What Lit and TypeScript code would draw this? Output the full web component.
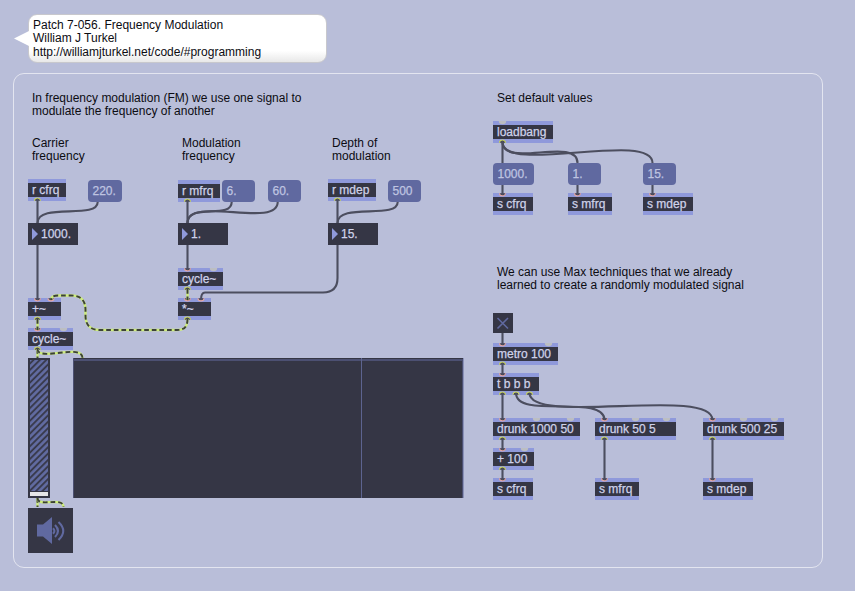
import { LitElement, html, svg, css, nothing } from "lit";
import { customElement, property } from "lit/decorators.js";
import { styleMap } from "lit/directives/style-map.js";

type Kind = "object" | "message" | "number";

interface PatchBox {
  kind: Kind;
  text: string;
  x: number;
  y: number;
  w: number;
  inlets?: string;
  outlets?: number[];
}

/* Inlets are "offset:state" pairs, where state is c (connected) or f (free). */
const boxes: PatchBox[] = [
  { kind: "object", text: "r cfrq", x: 28, y: 179, w: 38, outlets: [9.5] },
  { kind: "message", text: "220.", x: 88, y: 180, w: 34 },
  { kind: "number", text: "1000.", x: 28, y: 223, w: 50 },
  { kind: "object", text: "r mfrq", x: 178, y: 180, w: 42, outlets: [9.5] },
  { kind: "message", text: "6.", x: 222, y: 180, w: 32.6 },
  { kind: "message", text: "60.", x: 268, y: 180, w: 32.6 },
  { kind: "number", text: "1.", x: 178, y: 223, w: 50 },
  { kind: "object", text: "r mdep", x: 328, y: 179, w: 48, outlets: [9.5] },
  { kind: "message", text: "500", x: 388, y: 180, w: 32.6 },
  { kind: "number", text: "15.", x: 328, y: 223, w: 50 },
  { kind: "object", text: "cycle~", x: 178, y: 268, w: 45, inlets: "9.5:c 35.5:f", outlets: [9.5] },
  { kind: "object", text: "*~", x: 178, y: 298, w: 33, inlets: "9.5:c 23:c", outlets: [9.5] },
  { kind: "object", text: "+~", x: 28, y: 298, w: 33, inlets: "9.5:c 23:c", outlets: [9.5] },
  { kind: "object", text: "cycle~", x: 28, y: 328, w: 45, inlets: "9.5:c 35.5:f", outlets: [9.5] },
  { kind: "object", text: "loadbang", x: 493, y: 121, w: 60, inlets: "9.5:f", outlets: [9.5] },
  { kind: "message", text: "1000.", x: 493, y: 163, w: 41 },
  { kind: "message", text: "1.", x: 568, y: 163, w: 32.6 },
  { kind: "message", text: "15.", x: 643, y: 163, w: 32.6 },
  { kind: "object", text: "s cfrq", x: 493, y: 193, w: 40, inlets: "9.5:c" },
  { kind: "object", text: "s mfrq", x: 568, y: 193, w: 44, inlets: "9.5:c" },
  { kind: "object", text: "s mdep", x: 643, y: 193, w: 50, inlets: "9.5:c" },
  { kind: "object", text: "metro 100", x: 493, y: 343, w: 65, inlets: "9.5:c 55.5:f", outlets: [9.5] },
  { kind: "object", text: "t b b b", x: 493, y: 373, w: 46, inlets: "9.5:c", outlets: [9.5, 23, 36.5] },
  { kind: "object", text: "drunk 1000 50", x: 493, y: 418, w: 87, inlets: "9.5:c 43.5:f 77.5:f", outlets: [9.5] },
  { kind: "object", text: "drunk 50 5", x: 595, y: 418, w: 81, inlets: "9.5:c 40.5:f 71.5:f", outlets: [9.5] },
  { kind: "object", text: "drunk 500 25", x: 703, y: 418, w: 81, inlets: "9.5:c 40.5:f 71.5:f", outlets: [9.5] },
  { kind: "object", text: "+ 100", x: 493, y: 448, w: 41, inlets: "9.5:c 31.5:f", outlets: [9.5] },
  { kind: "object", text: "s cfrq", x: 493, y: 478, w: 40, inlets: "9.5:c" },
  { kind: "object", text: "s mfrq", x: 595, y: 478, w: 44, inlets: "9.5:c" },
  { kind: "object", text: "s mdep", x: 703, y: 478, w: 50, inlets: "9.5:c" },
];

const comments = [
  { x: 32, y: 92, lines: ["In frequency modulation (FM) we use one signal to", "modulate the frequency of another"] },
  { x: 32, y: 137, lines: ["Carrier", "frequency"] },
  { x: 182, y: 137, lines: ["Modulation", "frequency"] },
  { x: 332, y: 137, lines: ["Depth of", "modulation"] },
  { x: 497, y: 92, lines: ["Set default values"] },
  { x: 497, y: 266, lines: ["We can use Max techniques that we already", "learned to create a randomly modulated signal"] },
];

const controlWires = [
  "M37.5 199V223",
  "M97.7 202C97.7 220 37.5 202 37.5 223",
  "M37.5 245V300",
  "M187.5 200V223",
  "M231.7 202C231.7 220 187.5 202 187.5 223",
  "M277.7 202C277.7 229 187.5 195 187.5 223",
  "M187.5 245V270",
  "M337.5 199V223",
  "M397.7 202C397.7 220 337.5 202 337.5 223",
  "M337.5 245V278Q337.5 292.5 323 292.5H205Q201 292.5 201 300",
  "M502.5 141V163",
  "M502.5 142C502.5 169 577.5 136 577.5 163",
  "M502.5 142C502.5 175 652.5 130 652.5 163",
  "M502.5 185V195",
  "M577.5 185V195",
  "M652.5 185V195",
  "M502.5 333V345",
  "M502.5 363V375",
  "M502.5 393V420",
  "M516 393C516 420 604.5 393 604.5 420",
  "M529.5 393C529.5 426 712.5 386 712.5 420",
  "M502.5 438V450",
  "M502.5 468V480",
  "M604.5 438V480",
  "M712.5 438V480",
];

const signalWires = [
  "M187.5 289V300",
  "M37.5 319V330",
  "M187.5 319C187.5 327 184 330 177 330H100Q85.5 330 85.5 315.5V310Q85.5 295.5 71 295.5H58Q51 295.5 51 300",
  "M37.5 349V358",
  "M37.5 349C37.5 362 82.5 343 82.5 358",
  "M37.5 498V507",
  "M37.5 498C37.5 508 63.5 496 63.5 507",
];

@customElement("patch-box")
export class PatchBoxElement extends LitElement {
  @property({ attribute: false }) box!: PatchBox;

  static styles = css`
    :host {
      display: block;
      height: 22px;
      font: 12px/14px "Liberation Sans", Arial, sans-serif;
      color: #cfd2ea;
      -webkit-text-stroke: 0.25px currentColor;
    }
    .object, .message, .number {
      box-sizing: border-box;
      height: 22px;
      display: flex;
      align-items: center;
      padding-left: 4px;
      white-space: pre;
    }
    .object {
      background: #353645;
      border-top: 4px solid #8f99db;
      border-bottom: 4px solid #8f99db;
    }
    .message {
      background: #6069a0;
      border-radius: 4px;
      color: #bfc4e1;
      padding-left: 4.5px;
    }
    .number {
      background: #353645;
      gap: 3px;
    }
    .handle {
      width: 6px;
      height: 12px;
      background: #8f99db;
      clip-path: polygon(0 0, 100% 50%, 0 100%);
    }
    .ports {
      position: absolute;
      left: 0;
      top: 0;
      overflow: visible;
    }
    .free { fill: #bcbec2; }
    .inlet { fill: #45434e; stroke: #e2a6a6; stroke-width: 1.1; }
    .outlet { fill: #45474f; stroke: #cdd865; stroke-width: 1.1; }
  `;

  private ports() {
    const { inlets, outlets, w } = this.box;
    const ins = inlets ? inlets.split(" ").map((s) => s.split(":")) : [];
    return html`<svg class="ports" width=${w} height="22">
      ${ins.map(([x, s]) =>
        s === "c"
          ? svg`<path class="inlet" d="M${+x - 3} .2A3 2.7 0 0 0 ${+x + 3} .2"/>`
          : svg`<path class="free" d="M${+x - 3.7} 0A3.7 3.2 0 0 0 ${+x + 3.7} 0"/>`)}
      ${(outlets ?? []).map((x) => svg`<path class="outlet" d="M${x - 3} 21.8A3 2.8 0 0 1 ${x + 3} 21.8"/>`)}
    </svg>`;
  }

  render() {
    const { kind, text } = this.box;
    return html`<div class=${kind}>${kind === "number" ? html`<i class="handle"></i>` : nothing}<span>${text}</span></div>
      ${kind === "object" ? this.ports() : nothing}`;
  }
}

@customElement("app-root")
export class AppRoot extends LitElement {
  static styles = css`
    :host {
      display: block;
      position: relative;
      width: 855px;
      height: 591px;
      overflow: hidden;
      background: #b9bed9;
      font: 12px/13px "Liberation Sans", Arial, sans-serif;
      color: #0c0c12;
    }
    .at { position: absolute; }
    .line { white-space: pre; }
    .panel {
      box-sizing: border-box;
      left: 13px;
      top: 73px;
      width: 810px;
      height: 495px;
      border: 1px solid #e3e5f0;
      border-radius: 11px;
    }
    .bubble {
      box-sizing: border-box;
      left: 28px;
      top: 14px;
      width: 299px;
      height: 49px;
      padding: 4px 4px 0;
      line-height: 13.4px;
      border: 1px solid #c8c8cd;
      border-radius: 9px;
      background: linear-gradient(#fff 76%, #e8e8e8);
    }
    .layer { left: 0; top: 0; }
    .wire { fill: none; stroke: #4c4e5f; stroke-width: 2.1; }
    .glow { fill: none; stroke: #cdec7c; stroke-width: 2.4; }
    .dash { fill: none; stroke: #3c4138; stroke-width: 1.9; stroke-dasharray: 4.7 2.9; }
    .tail { fill: #fff; }
    .dark { fill: #353645; }
    .accent { fill: #6069a0; }
    .arc { fill: none; stroke: #6069a0; stroke-width: 2.1; }
    .cross { stroke: #6069a0; stroke-width: 1.6; }
    .stripe { stroke: #626ca3; stroke-width: 2.7; }
    .knob { fill: #e6e6e8; }
    .rule { fill: #5d648f; }
    .edge { fill: #4c5072; }
    .rim { fill: #8c92b9; }
  `;

  render() {
    return html`
      <div class="at panel"></div>
      <div class="at bubble">
        <div class="line">Patch 7-056. Frequency Modulation</div>
        <div class="line">William J Turkel</div>
        <div class="line">http://williamjturkel.net/code/#programming</div>
      </div>
      ${comments.map((c) => html`<div class="at" style=${styleMap({ left: `${c.x}px`, top: `${c.y}px` })}>${c.lines.map((l) => html`<div class="line">${l}</div>`)}</div>`)}
      ${boxes.map((b) => html`<patch-box class="at" .box=${b} style=${styleMap({ left: `${b.x}px`, top: `${b.y}px`, width: `${b.w}px` })}></patch-box>`)}
      <svg class="at layer" width="855" height="591" viewBox="0 0 855 591">
        <defs>
          <pattern id="hatch" width="4.5" height="4.5" patternUnits="userSpaceOnUse" patternTransform="rotate(45)">
            <path class="stripe" d="M1.5 0V4.5"/>
          </pattern>
        </defs>
        <path class="tail" d="M29 31L14 38.5L29 46Z"/>

        <path class="dark" d="M28 358h22v140h-22z"/>
        <path fill="url(#hatch)" d="M30 360h18v131h-18z"/>
        <path class="knob" d="M30 492h18v4h-18z"/>

        <path class="dark" d="M73 358h390v140h-390z"/>
        <path class="edge" d="M73 359h390v2h-390zM73 358h1v140h-1zM462 359h1v139h-1z"/>
        <path class="rim" d="M463 358h1v140h-1z"/>
        <path class="rule" d="M361 358h1v140h-1z"/>

        <path class="dark" d="M28 508h45v45h-45z"/>
        <path class="accent" d="M37 524.5h6L52 517v27l-9-7.5H37z"/>
        <path class="arc" d="M53 528.3Q55.8 531 53 533.7M55 525Q61 531 55 537M58.5 522Q68 531 58.5 540"/>

        <path class="dark" d="M493 313h20v20h-20z"/>
        <path class="cross" d="M497.5 318l10.5 10.5M508 318l-10.5 10.5"/>

        ${controlWires.map((d) => svg`<path class="wire" d=${d}/>`)}
        ${signalWires.map((d) => svg`<path class="glow" d=${d}/><path class="dash" d=${d}/>`)}
      </svg>
    `;
  }
}
